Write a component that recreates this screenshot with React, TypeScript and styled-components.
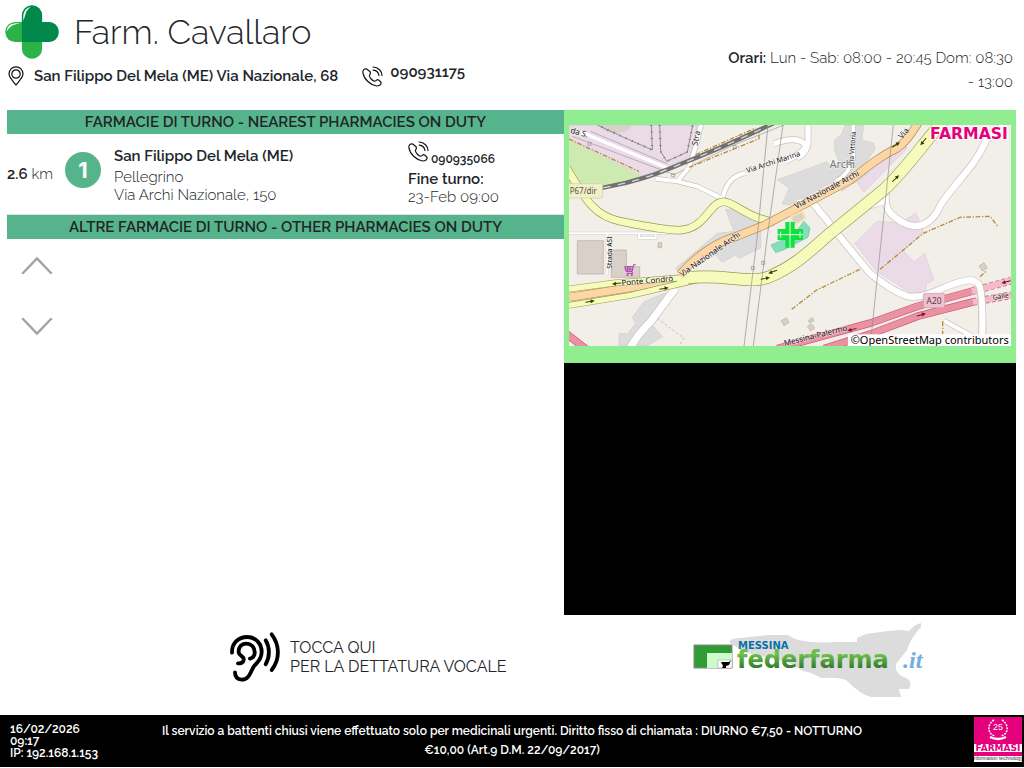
import React from 'react';
import styled, { createGlobalStyle } from 'styled-components';

const GlobalStyle = createGlobalStyle`
  * { box-sizing: border-box; }
  body {
    margin: 0;
    background: #fff;
    color: #212529;
    font-family: Raleway, Lato, "Open Sans", sans-serif;
    font-size: 15px;
    font-weight: 300;
  }
  h1, h2, h3, p { margin: 0; font-weight: inherit; font-size: inherit; }
  button { border: 0; padding: 0; background: none; color: inherit; font: inherit; cursor: pointer; }
  a { color: inherit; text-decoration: none; }
  svg { display: block; flex: none; }
`;

const GREEN = '#56b48c';

const Page = styled.div`
  min-height: 100vh;
  padding-bottom: 1px;
  display: flex;
  flex-direction: column;
`;

const Header = styled.header`
  min-height: 110px;
  padding: 5px 11px 0 5px;
  display: flex;
  justify-content: space-between;
`;

const Brand = styled.div`
  display: flex;
  align-items: center;
  gap: 15px;
  height: 54px;
`;

const Title = styled.h1`
  && { font-size: 34px; font-weight: 300; }
  line-height: 46px;
`;

const Contacts = styled.div`
  display: flex;
  align-items: center;
  padding: 6px 3px;
  font-weight: 600;
  line-height: 22px;
`;

const Address = styled.span`
  margin: 0 24px 0 10px;
`;

const HeaderPhone = styled.a`
  display: flex;
  gap: 7px;
  line-height: 12px;
`;

const Hours = styled.p`
  width: 290px;
  padding-top: 41px;
  text-align: right;
  line-height: 24px;
`;

const Strong = styled.strong`
  font-weight: 600;
`;

const Main = styled.main`
  flex: 1;
  display: grid;
  grid-template-columns: 557fr 452fr;
  padding: 0 8px 0 7px;
`;

const Column = styled.section`
  display: flex;
  flex-direction: column;
`;

const SectionTitle = styled.h2`
  && { font-weight: 600; }
  background: ${GREEN};
  text-align: center;
  line-height: 24px;
`;

const PharmacyRow = styled.article`
  display: grid;
  grid-template-columns: 58px 49px 1fr 156px;
  align-items: center;
  height: 81px;
  border-bottom: 1px solid #dee2e6;
`;

const Badge = styled.span`
  display: grid;
  place-items: center;
  width: 36px;
  height: 36px;
  margin-bottom: 8px;
  border-radius: 50%;
  background: ${GREEN};
  color: #fff;
  font: 700 22px Inter, sans-serif;
`;

const Details = styled.div`
  line-height: 18px;
`;

const Town = styled.h3`
  && { font-weight: 600; }
  line-height: 24px;
`;

const Phone = styled.a`
  display: flex;
  align-items: flex-end;
  gap: 2px;
  height: 25px;
  margin-bottom: 3px;
  font-size: 12px;
  font-weight: 600;
  line-height: 16px;

  svg { margin-bottom: 5px; }
`;

const Scroller = styled.div`
  display: flex;
  flex-direction: column;
  align-items: flex-start;
  gap: 44px;
  padding: 18px 14px;
`;

const MapPanel = styled.div`
  padding: 15px 5px 17px;
  background: lightgreen;
`;

const Map = styled.svg`
  width: 100%;
  height: auto;
`;

const Video = styled.div`
  flex: 1;
  min-height: 200px;
  background: #000;
`;

const Services = styled.section`
  display: flex;
  justify-content: space-between;
  align-items: flex-start;
  padding: 7px 89px 0 229px;
  height: 100px;
`;

const Dictation = styled.button`
  && { font-size: 16px; font-weight: 400; }
  display: flex;
  align-items: center;
  gap: 9px;
  margin-top: 9px;
  text-align: left;
  line-height: 19px;
`;

const Footer = styled.footer`
  display: flex;
  justify-content: space-between;
  height: 52px;
  padding: 2px 2px 0 10px;
  background: #000;
  color: #fff;
  font-size: 12px;
  font-weight: 600;
`;

const Status = styled.div`
  width: 110px;
  padding-top: 6px;
  line-height: 12px;
`;

const Notice = styled.p`
  flex: 1;
  max-width: 720px;
  padding-top: 5px;
  text-align: center;
  line-height: 19px;
`;

const FooterLogo = styled.div`
  width: 118px;
  display: flex;
  justify-content: flex-end;
`;

const PharmacyCross = () => (
  <svg width="54" height="54" viewBox="14 14 163 163" aria-hidden="true">
    <rect x="15" y="65" width="160" height="61" rx="30" fill="#2bb34a" />
    <rect x="65" y="15" width="61" height="161" rx="30" fill="#2bb34a" />
    <path d="M65 126V46a30 30 0 0 1 61 0v19h20a30 30 0 0 1 0 61z" fill="#00894a" />
    <path d="M69 62V48Q70 24 92 19Q77 30 75 46z" fill="#fff" opacity=".9" />
    <path d="M19 94Q20 70 46 69H61Q30 72 19 94z" fill="#fff" opacity=".9" />
  </svg>
);

const PinIcon = () => (
  <svg width="16" height="20" viewBox="0 0 16 20" fill="none" stroke="#111" strokeWidth="1.2" aria-hidden="true">
    <path d="M8 19C5 15 1 11.500 1 7.800a7 7 0 0 1 14 0C15 11.500 11 15 8 19z" />
    <circle cx="8" cy="8" r="4.200" />
  </svg>
);

const PhoneIcon = () => (
  <svg width="21" height="21" viewBox="64 76 62 62" fill="none" stroke="#111" strokeWidth="3.500" strokeLinecap="round" strokeLinejoin="round" aria-hidden="true">
    <path d="M67 97C65 88 71 83 78 85L88 93C91 98 85 102 86 106C88 113 96 120 101 121C106 121 108 114 113 117L120 124C122 131 115 135 107 135C88 132 69 113 67 97Z" />
    <path d="M97 79C112 80 123 91 123 104M97 88C107 89 113 96 114 104" />
  </svg>
);

const Chevron = ({ down }: { down?: boolean }) => (
  <svg width="32" height="17" viewBox="0 0 32 17" fill="none" stroke="#a3a3a3" strokeWidth="2.500" strokeLinecap="round" aria-hidden="true">
    <path d={down ? 'M2 1L16 15.500L30 1' : 'M2 16L16 1.500L30 16'} />
  </svg>
);

const EarIcon = () => (
  <svg width="52" height="52" viewBox="28 32 156 156" fill="none" stroke="#000" strokeWidth="11.500" strokeLinecap="round" aria-hidden="true">
    <path d="M37 97C36 68 57 50 82 50C108 50 126 70 126 95C126 119 111 127 102 139C92 155 89 178 66 178C53 177 46 169 46 156" />
    <path d="M91 115C102 112 106 105 105 95C104 79 94 70 80 70C65 70 56 80 57 96C59 108 73 106 72 118C71 127 63 130 55 129" />
    <path d="M138 60C151 82 151 110 138 132" />
    <path d="M156 42C181 75 181 117 156 149" />
  </svg>
);

const FederfarmaLogo = () => (
  <svg width="242" height="77" viewBox="0 0 242 77" role="img" aria-label="Messina federfarma.it">
    <defs>
      <linearGradient id="word" x1="0" y1="0" x2="0" y2="1">
        <stop offset=".3" stopColor="#6cc04a" />
        <stop offset="1" stopColor="#175c22" />
      </linearGradient>
    </defs>
    <path d="M36 20Q38 16 47 16L75 13H95L102 17Q120 22 142 20H164V16L173 12L195 9L208 8L216 9Q222 2 228 1V5Q218 15 214 28L203 42Q201 52 213 56Q220 60 216 67H206L208 75H178Q168 73 153 58Q145 55 128 56Q118 50 110 49L95 40L50 30z" fill="#dcdcdc" />
    <rect x="1" y="23" width="38" height="23" fill="#309b34" stroke="#888" />
    <rect x="14" y="31" width="25" height="15" fill="#ccfbcc" />
    <rect x="25" y="38" width="14" height="8" fill="#fff" stroke="#999" strokeWidth=".5" />
    <path d="M28 40H36L38 38L36 43L33 44V46H29L30 44z" />
    <text x="45" y="27" fontFamily="DejaVu Sans" fontWeight="700" fontSize="10" fill="#0870a8">MESSINA</text>
    <text x="44" y="46" fontFamily="DejaVu Sans" fontWeight="700" fontSize="24" fill="url(#word)">federfarma</text>
    <text x="210" y="46" fontFamily="Liberation Serif" fontStyle="italic" fontWeight="700" fontSize="24" fill="#72aee0">.it</text>
  </svg>
);

const FarmasiBadge = () => (
  <svg width="48" height="45" viewBox="0 0 48 45" role="img" aria-label="Farmasi information technology">
    <rect width="48" height="39" fill="#e5007d" />
    <g fill="none" stroke="#fff">
      <path d="M20 3C13 7 13 17 21 19M28 3C35 7 35 17 27 19" strokeWidth="1.500" strokeDasharray="2 1" />
      <path d="M16 20Q24 24 32 20" strokeWidth="2.500" />
    </g>
    <text x="24" y="13" textAnchor="middle" fontFamily="Liberation Sans" fontWeight="400" fontSize="9" fill="#fff">25</text>
    <rect y="27" width="48" height="8" fill="#fff" />
    <text x="24" y="34" textAnchor="middle" fontFamily="DejaVu Sans" fontWeight="700" fontSize="9" fill="#e5007d">FARMASI</text>
    <rect y="39" width="48" height="6" fill="#fff" />
    <text x="24" y="43" textAnchor="middle" fontFamily="Liberation Sans" fontWeight="400" fontSize="5" fill="#333">information technology</text>
  </svg>
);

type RoadProps = { d: string; width: number; fill: string; edge: string };

const Road = ({ d, width, fill, edge }: RoadProps) => (
  <g fill="none" strokeLinejoin="round">
    <path d={d} stroke={edge} strokeWidth={width + 4} />
    <path d={d} stroke={fill} strokeWidth={width} />
  </g>
);

type LabelProps = { x: number; y: number; turn?: number; size?: number; fill?: string; children: React.ReactNode };

const Label = ({ x, y, turn = 0, size = 24, fill = '#111', children }: LabelProps) => (
  <text
    transform={`translate(${x} ${y}) rotate(${turn})`}
    fontFamily="Noto Sans"
    fontWeight="400"
    fontSize={size}
    fill={fill}
    stroke="#fff"
    strokeOpacity=".5"
    strokeWidth="4"
    paintOrder="stroke"
  >
    {children}
  </text>
);

const Arrow = ({ x, y, turn, fill = '#3c3c00' }: { x: number; y: number; turn: number; fill?: string }) => (
  <path transform={`translate(${x} ${y}) rotate(${turn})`} d="M-14 -1H2V-6L14 0L2 6V2H-14z" fill={fill} />
);

const YELLOW = { fill: '#f6fabb', edge: '#9a9c55' };
const ORANGE = { fill: '#fcd6a4', edge: '#b98a4a' };
const WHITE = { fill: '#fff', edge: '#c4c2bf' };
const MOTORWAY = { fill: '#e892a2', edge: '#d4547a' };

const StreetMap = () => (
  <Map viewBox="15 51 1326 663" role="img" aria-label="Mappa di Archi">
    <rect x="15" y="51" width="1326" height="663" fill="#f2efe9" />
    <path d="M15 51H400L378 145L300 182L235 203L15 97z" fill="#ebdbe8" stroke="#d5c0d0" strokeWidth="2" />
    <path d="M108 51Q120 76 155 76Q190 76 205 51z" fill="#d9d0c9" />
    <path d="M15 97L235 205L118 240L15 232z" fill="#cdebb0" />
    <path d="M878 220L1018 110L1030 120L900 252zM873 406L940 340L1010 345L1055 315L1080 370L1018 428L1050 463L1082 436L1110 516L1088 526L1083 555H1040L938 490z" fill="#ebdbe8" stroke="#dccada" strokeWidth="2" />
    <g fill="#dcdcdc" stroke="#cfcfcf" strokeWidth="2">
      <path d="M640 215L788 162L803 175L828 170L812 125V95L833 80L843 51H900L893 95L928 105L933 125L903 165L908 200L833 250L818 215L678 292L655 288L675 240z" />
      <path d="M485 305L520 300L590 350V420L525 451L515 441L475 463L455 441L350 496L335 481L460 376L510 370z" />
      <path d="M205 628L240 581L300 556L335 560L265 651L295 686L250 714H165V676L190 678L215 646z" />
    </g>
    <g fill="none" stroke="#fff" strokeWidth="10">
      <path d="M50 72L315 182" />
      <path d="M15 376H345L380 366M130 376V500M225 376V390H275V376" stroke="#ccc" strokeWidth="9" />
      <path d="M15 376H345L380 366M130 376V500M225 376V390H275V376" strokeWidth="6" />
    </g>
    <g fill="none" stroke="#666" strokeWidth="2">
      <path d="M262 51L265 126L175 86L100 51M287 51L290 130L308 160L370 132L386 51" />
      <path d="M25 85L330 200L500 115L660 51M80 70L250 142L310 167" stroke="#999" />
      <path d="M262 51L265 126L175 86L100 51M287 51L290 130L308 160L370 132L386 51" strokeWidth="7" strokeDasharray="2 18" />
    </g>
    <Road {...WHITE} width={12} d="M275 212L340 220L400 235L475 272M340 220L375 178L400 100L412 45M476 272Q488 205 545 195" />
    <Road {...WHITE} width={16} d="M630 108Q695 82 722 108Q734 126 665 160M732 45V95Q735 130 700 150" />
    <Road {...WHITE} width={11} d="M868 51V150Q855 200 815 220" />
    <Road {...WHITE} width={19} d="M1320 51L1268 95C1230 180 1180 215 1130 290C1105 350 1060 370 1010 340C960 310 962 285 966 235" />
    <Road {...WHITE} width={19} d="M700 285C765 275 750 300 780 325L823 381L918 496C960 530 1000 555 1030 565C1100 575 1150 520 1220 516C1260 520 1255 600 1255 714M905 295L960 280" />
    <Road {...WHITE} width={12} d="M1140 638L1225 685" />
    <Road {...WHITE} width={22} d="M335 540L260 641Q215 686 198 722" />
    <g fill="none" stroke="#b68c3a" strokeWidth="4" strokeDasharray="14 5 4 5">
      <path d="M15 93L225 190M395 140L575 60M375 178L585 92V60M683 604L758 546L888 484M948 484L1078 376L1188 328L1278 325L1303 357M1136 640V679M1248 506L1268 488" />
      <path d="M280 632L360 690L345 714" stroke="#edc4cb" strokeDasharray="8 6" />
    </g>
    <g fill="none">
      <path d="M15 264L118 239C230 220 300 188 350 168C440 133 530 93 630 45" stroke="#707070" strokeWidth="13" />
      <path d="M118 239C230 220 300 188 350 168C440 133 530 93 630 45" stroke="#d8d8d8" strokeWidth="4" strokeDasharray="22 22" />
    </g>
    <g fill="#d9d0c9" stroke="#b9aaa0" strokeWidth="2">
      <path d="M40 398h78v100h-78zM142 426h45v50h40v32h-85zM282 404h11v15h-11zM1245 474l15 -10 10 16 -14 9zM652 638l15 -9 8 14 -15 10zM733 638l12 -9 5 9 -13 6zM730 656l12 -9 10 13 -12 9z" />
    </g>
    <Road {...YELLOW} width={21} d="M8 180C70 285 95 325 170 340S330 372 360 365C430 352 435 283 480 281C515 285 550 330 630 342" />
    <Road {...ORANGE} width={22} d="M15 568L380 511" />
    <Road {...YELLOW} width={16} d="M15 543L150 525L370 508M15 592L200 562L400 515" />
    <Road {...ORANGE} width={22} d="M348 500C400 440 460 402 520 384L600 352L690 305L860 215C920 170 940 150 1000 120C1030 100 1050 65 1064 42" />
    <Road {...YELLOW} width={34} d="M370 510C470 495 560 532 620 505C700 470 740 425 800 375L960 245C1020 190 1060 130 1135 42" />
    <path d="M340 512L400 506V520L340 530z" fill={YELLOW.fill} />
    <Road {...MOTORWAY} width={19} d="M640 722L700 705L920 645L1060 595L1223 550M780 722L920 678L1060 625L1226 582M0 672L75 730" />
    <g fill="none">
      <path d="M1223 550L1341 518M1226 582L1341 562" stroke="#d4547a" strokeWidth="23" strokeDasharray="12 7" />
      <path d="M1223 550L1341 518M1226 582L1341 562" stroke="#f2bcca" strokeWidth="19" />
    </g>
    <Road {...WHITE} width={19} d="M1240 522Q1258 540 1255 680" />
    <g fill="none" stroke="#8c8c8c" strokeWidth="2">
      <path d="M612 51L580 384L540 714M657 51L610 384L568 714M988 51L953 384L922 680" />
      <path d="M562 476h9v9h-9zM593 460h9v9h-9zM72 103h9v9h-9zM323 197h9v9h-9zM508 113h9v9h-9z" />
    </g>
    <path d="M621 411L655 396L693 374L720 340L738 360L732 388L660 425L635 434z" fill="#86dcbd" stroke="#65c5a2" strokeWidth="2" />
    <path d="M682 325L715 310L725 330L698 350L685 345z" fill="#d9d0c9" stroke="#f3e8ac" strokeWidth="6" />
    <path d="M664 342h28v21h25v33h-25v23h-28v-23h-23v-33h23z" fill="#10e040" />
    <path d="M678 342v77M641 380h76M650 371v18M708 371v18" stroke="#e6ffe9" strokeWidth="3" />
    <path d="M215 470h-6l-5 20h-18l-4 -14h24M204 490l2 6h-18M184 483h22M191 476v14M198 476v14" fill="none" stroke="#ac39ac" strokeWidth="3" />
    <path d="M188 499h5v5h-5zM201 499h5v5h-5z" fill="#ac39ac" />

    <Arrow x={158} y={527} turn={175} />
    <Arrow x={78} y={580} turn={-8} />
    <Arrow x={300} y={541} turn={-8} />
    <Arrow x={604} y={511} turn={-10} />
    <Arrow x={626} y={492} turn={160} />
    <Arrow x={995} y={211} turn={-42} />
    <Arrow x={1078} y={101} turn={130} />
    <Arrow x={996} y={110} turn={-32} />
    <Arrow x={864} y={665} turn={166} fill="#72132f" />
    <Arrow x={1072} y={620} turn={-14} fill="#72132f" />
    <Arrow x={1326} y={522} turn={166} fill="#72132f" />

    <Label x={18} y={74} turn={16}>da S.</Label>
    <Label x={400} y={114} turn={-78}>Stra</Label>
    <Label x={550} y={195} turn={-18} size={22}>Via Archi Marina</Label>
    <Label x={868} y={172} turn={-86} size={20}>Via Vittoria</Label>
    <Label x={1014} y={94} turn={-50}>Via</Label>
    <Label x={797} y={181} size={32} fill="#777">Archi</Label>
    <Label x={697} y={303} turn={-28}>Via Nazionale Archi</Label>
    <Label x={354} y={507} turn={-35}>Via Nazionale Archi</Label>
    <Label x={173} y={533} turn={-5}>Ponte Condrò</Label>
    <Label x={145} y={482} turn={-90} size={20}>Strada ASI</Label>
    <Label x={1288} y={576} turn={-10} size={20}>Galle</Label>
    <Label x={662} y={714} turn={-14} size={24}>Messina-Palermo</Label>
    <rect x="8" y="227" width="108" height="43" rx="5" fill="#f0efcc" stroke="#cfcda0" strokeWidth="2" />
    <text x="17" y="257" fontFamily="Noto Sans" fontWeight="400" fontSize="24" fill="#555528">P67/dir</text>
    <rect x="1078" y="556" width="64" height="43" rx="5" fill="#eac3cf" stroke="#cf9baa" strokeWidth="2" />
    <text x="1110" y="587" textAnchor="middle" fontFamily="Noto Sans" fontWeight="400" fontSize="25" fill="#722f45">A20</text>
    <text x="1098" y="92" fontFamily="DejaVu Sans" fontWeight="700" fontSize="47" fill="#e5007d" stroke="#fff" strokeWidth="6" paintOrder="stroke">FARMASI</text>
    <rect x="852" y="679" width="489" height="36" fill="#fff" />
    <text x="860" y="708" fontFamily="Noto Sans" fontWeight="400" fontSize="33" fill="#000">©OpenStreetMap contributors</text>
  </Map>
);

export default function App() {
  return (
    <Page>
      <GlobalStyle />
      <Header>
        <div>
          <Brand>
            <PharmacyCross />
            <Title>Farm. Cavallaro</Title>
          </Brand>
          <Contacts>
            <PinIcon />
            <Address>San Filippo Del Mela (ME) Via Nazionale, 68</Address>
            <HeaderPhone href="tel:090931175">
              <PhoneIcon />
              090931175
            </HeaderPhone>
          </Contacts>
        </div>
        <Hours>
          <Strong>Orari:</Strong> Lun - Sab: 08:00 - 20:45 Dom: 08:30 - 13:00
        </Hours>
      </Header>

      <Main>
        <Column>
          <SectionTitle>FARMACIE DI TURNO - NEAREST PHARMACIES ON DUTY</SectionTitle>
          <PharmacyRow>
            <span><Strong>2.6</Strong> km</span>
            <Badge>1</Badge>
            <Details>
              <Town>San Filippo Del Mela (ME)</Town>
              <p>Pellegrino</p>
              <p>Via Archi Nazionale, 150</p>
            </Details>
            <Details>
              <Phone href="tel:090935066">
                <PhoneIcon />
                090935066
              </Phone>
              <p><Strong>Fine turno:</Strong></p>
              <p>23-Feb 09:00</p>
            </Details>
          </PharmacyRow>
          <SectionTitle>ALTRE FARMACIE DI TURNO - OTHER PHARMACIES ON DUTY</SectionTitle>
          <Scroller>
            <button type="button" aria-label="Scorri su"><Chevron /></button>
            <button type="button" aria-label="Scorri giù"><Chevron down /></button>
          </Scroller>
        </Column>
        <Column>
          <MapPanel><StreetMap /></MapPanel>
          <Video />
        </Column>
      </Main>

      <Services>
        <Dictation type="button">
          <EarIcon />
          <span>TOCCA QUI<br />PER LA DETTATURA VOCALE</span>
        </Dictation>
        <FederfarmaLogo />
      </Services>

      <Footer>
        <Status>
          <div>16/02/2026</div>
          <div>09:17</div>
          <div>IP: 192.168.1.153</div>
        </Status>
        <Notice>
          Il servizio a battenti chiusi viene effettuato solo per medicinali urgenti. Diritto fisso di chiamata : DIURNO €7,50 - NOTTURNO €10,00 (Art.9 D.M. 22/09/2017)
        </Notice>
        <FooterLogo><FarmasiBadge /></FooterLogo>
      </Footer>
    </Page>
  );
}
